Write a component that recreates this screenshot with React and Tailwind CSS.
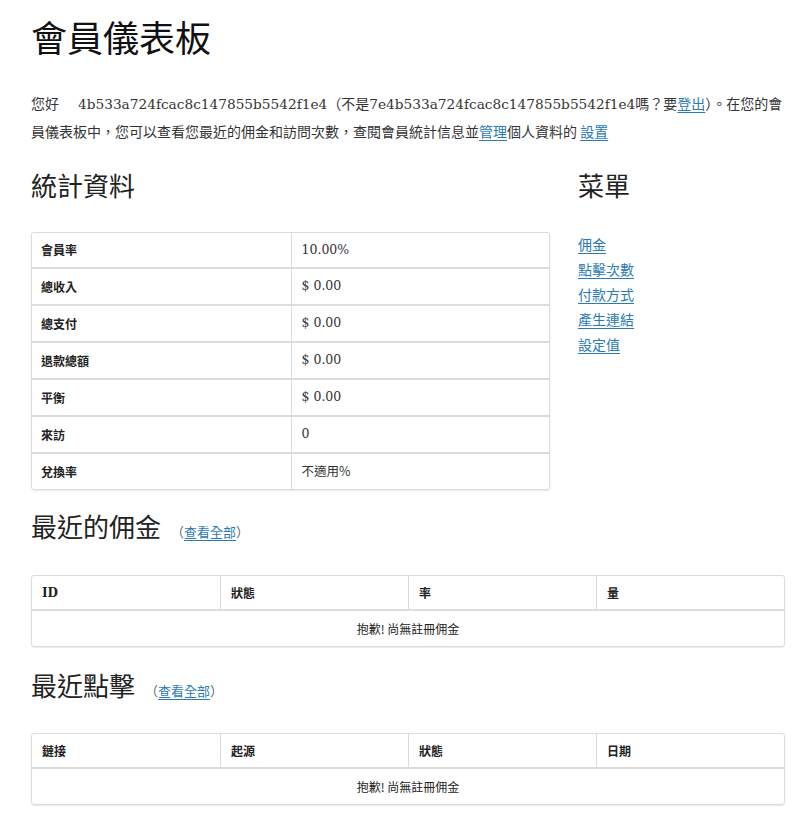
import React from "react";

const cjk = '"Noto Sans CJK TC", "Noto Sans", sans-serif';
const serif = '"DejaVu Serif", "Noto Sans CJK TC", serif';

function Link({ children }) {
  return <a href="#" className="text-[#2a7ab5] underline underline-offset-[3px] decoration-[#2a7ab5]">{children}</a>;
}

function H2({ children, extra }) {
  return (
    <div className="flex items-baseline h-[36px] leading-[36px]">
      <h2 className="text-[26px] text-[#222] font-normal" style={{ fontFamily: cjk }}>{children}</h2>
      {extra}
    </div>
  );
}

const stats = [
  ["會員率", "10.00%"],
  ["總收入", "$ 0.00"],
  ["總支付", "$ 0.00"],
  ["退款總額", "$ 0.00"],
  ["平衡", "$ 0.00"],
  ["來訪", "0"],
  ["兌換率", "不適用%"],
];

function EmptyTable({ cols }) {
  return (
    <div className="border border-[#dcdcdc] rounded-[3px] shadow-[0_1px_1px_rgba(0,0,0,0.08)] text-[12px] text-[#222]">
      <div className="grid grid-cols-4 h-[35px] border-b-2 border-[#dcdcdc]">
        {cols.map((c, i) => (
          <div key={c} className={`flex items-center px-[10px] font-bold ${i > 0 ? "border-l border-[#dcdcdc]" : ""}`} style={{ fontFamily: c === "ID" ? serif : cjk }}>
            {c}
          </div>
        ))}
      </div>
      <div className="h-[35px] flex items-center justify-center" style={{ fontFamily: cjk }}>抱歉! 尚無註冊佣金</div>
    </div>
  );
}

const seeAll = (
  <span className="ml-[10px] text-[13px] text-[#666]">（<Link>查看全部</Link>）</span>
);

export default function App() {
  return (
    <div className="bg-white min-h-[829px] text-[#222]" style={{ fontFamily: cjk }}>
      <div className="w-[754px] ml-[31px] pt-[12px]">
        <h1 className="text-[36px] leading-[48px] font-normal text-[#111]">會員儀表板</h1>
        <p className="mt-[30px] text-[14px] leading-[27px] text-[#333]">
          您好<span className="inline-block w-[19px]"></span>
          <span style={{ fontFamily: serif }} className="text-[13.7px]">4b533a724fcac8c147855b5542f1e4</span>（不是
          <span style={{ fontFamily: serif }} className="text-[13.7px]">7e4b533a724fcac8c147855b5542f1e4</span>嗎？要<Link>登出</Link>）。在您的會員儀表板中，您可以查看您最近的佣金和訪問次數，查閱會員統計信息並<Link>管理</Link>個人資料的 <Link>設置</Link>
        </p>

        <div className="flex mt-[22px]">
          <div className="w-[519px]">
            <H2>統計資料</H2>
            <div className="mt-[29px] border border-[#dcdcdc] rounded-[3px] shadow-[0_1px_2px_rgba(0,0,0,0.1)]">
              {stats.map(([k, v], i) => (
                <div key={k} className={`grid grid-cols-2 ${i > 0 ? "h-[37px] border-t-2 border-[#dcdcdc]" : "h-[34px]"}`}>
                  <div className="flex items-center px-[9px] text-[12px] font-bold text-[#222]">{k}</div>
                  <div className="flex items-center px-[10px] border-l border-[#dcdcdc] text-[12.5px] text-[#333]" style={{ fontFamily: v.startsWith("不") ? cjk : serif }}>{v}</div>
                </div>
              ))}
            </div>
          </div>
          <div className="ml-[28px] flex-1">
            <H2>菜單</H2>
            <ul className="mt-[29px] text-[14px] leading-[25px]">
              {["佣金", "點擊次數", "付款方式", "產生連結", "設定值"].map((m) => (
                <li key={m}><Link>{m}</Link></li>
              ))}
            </ul>
          </div>
        </div>

        <div className="mt-[18px]">
          <H2 extra={seeAll}>最近的佣金</H2>
          <div className="mt-[31px]">
            <EmptyTable cols={["ID", "狀態", "率", "量"]} />
          </div>
        </div>

        <div className="mt-[20px]">
          <H2 extra={seeAll}>最近點擊</H2>
          <div className="mt-[30px]">
            <EmptyTable cols={["鏈接", "起源", "狀態", "日期"]} />
          </div>
        </div>
      </div>
    </div>
  );
}
